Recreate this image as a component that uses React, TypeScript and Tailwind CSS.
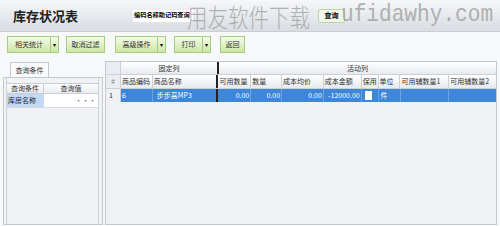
import React from "react";

const F = { fontFamily: '"Noto Sans CJK SC", "Noto Sans", sans-serif' };

function Btn({ label, w, arrow }: { label: string; w: number; arrow?: boolean }) {
  return (
    <div className="flex h-[17px] border border-[#a7cd80] bg-gradient-to-b from-[#f5fbec] to-[#cbe7a4] text-[7px] text-[#333]">
      <div className="flex items-center justify-center whitespace-nowrap" style={{ width: w }}>{label}</div>
      {arrow && (
        <div className="flex w-[8px] items-center justify-center border-l border-[#a7cd80] text-[6px] text-black">▾</div>
      )}
    </div>
  );
}

const cols: { t: string; w: number }[] = [
  { t: "可用数量", w: 33 },
  { t: "数量", w: 31 },
  { t: "成本均价", w: 42 },
  { t: "成本金额", w: 38 },
  { t: "保用", w: 17 },
  { t: "单位", w: 22 },
  { t: "可用辅数量1", w: 49 },
  { t: "可用辅数量2", w: 47 },
];

export default function App() {
  const vals = ["0.00", "0.00", "0.00", "-12000.00"];
  return (
    <div className="relative flex h-[226px] w-[500px] flex-col overflow-hidden bg-[#f7f8fa] text-[7px] text-[#333]" style={F}>
      {/* header */}
      <div className="flex h-[32px] items-center border-b border-[#c9ced4] bg-gradient-to-b from-[#f6f7f9] to-[#d8dde2] pl-[13px]">
        <div className="whitespace-nowrap text-[13px] font-bold leading-none text-[#222]">库存状况表</div>
        <div className="ml-[55px] flex h-[12px] w-[60px] items-center overflow-hidden whitespace-nowrap bg-white pl-[1px] text-[6.2px] font-bold leading-none text-black">编码名称助记码查询</div>
        <div className="ml-[125px] flex h-[14px] w-[27px] items-center justify-center rounded-[2px] border border-[#b9d8a0] bg-[#f1f7ea] text-[7px] font-bold text-black">查询</div>
      </div>
      {/* watermark */}
      <span
        className="pointer-events-none absolute left-[187px] top-[2px] inline-block origin-left scale-x-[0.82] whitespace-nowrap text-[25px] font-light leading-[28px] text-[#9c9c9c]"
        style={{ fontFamily: '"Noto Sans CJK SC", sans-serif', opacity: 0.75 }}
      >
        用友软件下载
      </span>
      <span
        className="pointer-events-none absolute left-[341px] top-[1px] inline-block origin-left scale-x-[0.88] whitespace-nowrap text-[24px] leading-[28px] text-[#9c9c9c]"
        style={{ fontFamily: '"Liberation Mono", monospace', opacity: 0.75 }}
      >
        ufidawhy.com
      </span>
      {/* toolbar */}
      <div className="mt-[4px] flex pl-[7px]">
        <Btn label="相关统计" w={42} arrow />
        <div className="ml-[7px]"><Btn label="取消过滤" w={37} /></div>
        <div className="ml-[10px]"><Btn label="高级操作" w={41} arrow /></div>
        <div className="ml-[8px]"><Btn label="打印" w={27} arrow /></div>
        <div className="ml-[9px]"><Btn label="返回" w={23} /></div>
      </div>
      {/* main */}
      <div className="mt-[8px] flex flex-1 pb-[1px] pl-[3px]">
        {/* left panel */}
        <div className="flex w-[100px] flex-col">
          <div className="flex h-[16px] items-end pl-[7px]">
            <div className="flex h-[15px] w-[39px] items-center justify-center border border-b-0 border-[#c5c9cf] bg-[#fafbfc] text-[7px]">查询条件</div>
          </div>
          <div className="flex flex-1 border border-[#c5c9cf] bg-[#f0f2f5]">
            <div className="ml-[2px] mr-[3px] flex flex-1 flex-col border-x border-[#cfd3d8] pt-[5px]">
              <div className="flex h-[11px] border-y border-[#c9cdd2] bg-gradient-to-b from-white to-[#e8ebee]">
                <div className="flex w-[37px] items-center justify-center border-r border-[#c9cdd2]">查询条件</div>
                <div className="flex flex-1 items-center justify-center">查询值</div>
              </div>
              <div className="flex h-[14px] border-b border-[#d5d9de]">
                <div className="flex w-[37px] items-center bg-[#c3d8f4] pl-[1px] text-[#123]">库房名称</div>
                <div className="flex flex-1 items-center justify-end bg-white pr-[2px] text-[#666]">···</div>
              </div>
            </div>
          </div>
        </div>
        {/* grid */}
        <div className="ml-[2px] flex w-[392px] flex-col border border-[#c5c9cf] bg-[#eff1f5]">
          <div className="flex h-[13px] border-b border-[#cdd1d6] bg-gradient-to-b from-white to-[#e7eaee]">
            <div className="w-[15px] border-r border-[#cdd1d6] bg-[#e9ecf0]" />
            <div className="flex w-[96px] items-center justify-center">固定列</div>
            <div className="w-[2px] bg-[#222]" />
            <div className="flex flex-1 items-center justify-center">活动列</div>
          </div>
          <div className="flex h-[14px] border-b border-[#cdd1d6] bg-gradient-to-b from-white to-[#e7eaee]">
            <div className="flex w-[15px] items-center justify-center border-r border-[#cdd1d6] bg-[#e9ecf0] text-[#888]">#</div>
            <div className="flex w-[32px] items-center border-r border-[#cdd1d6] pl-[1px]">商品编码</div>
            <div className="flex w-[64px] items-center pl-[1px]">商品名称</div>
            <div className="w-[2px] bg-[#222]" />
            {cols.map((c, i) => (
              <div key={i} className="flex items-center whitespace-nowrap border-r border-[#cdd1d6] pl-[1px] last:border-r-0" style={{ width: c.w }}>{c.t}</div>
            ))}
          </div>
          <div className="flex h-[13px] text-white">
            <div className="flex w-[15px] items-center border-r border-[#cdd1d6] bg-[#eef0f3] pl-[3px] text-[#333]">1</div>
            <div className="flex w-[32px] items-center border-r border-[#6aa3e3] bg-[#3d86d8] pl-[1px]">6</div>
            <div className="flex w-[64px] items-center bg-[#3d86d8] pl-[4px]">步步高MP3</div>
            <div className="w-[2px] bg-[#222]" />
            {cols.map((c, i) => (
              <div key={i} className="flex items-center justify-end border-r border-[#6aa3e3] bg-[#3d86d8] pr-[1px] last:border-r-0" style={{ width: c.w }}>
                {i < 4 ? vals[i] : i === 4 ? (
                  <div className="mr-[5px] h-[9px] w-[7px] bg-white" />
                ) : i === 5 ? (
                  <span className="mr-auto pl-[2px]">件</span>
                ) : null}
              </div>
            ))}
          </div>
        </div>
      </div>
    </div>
  );
}
